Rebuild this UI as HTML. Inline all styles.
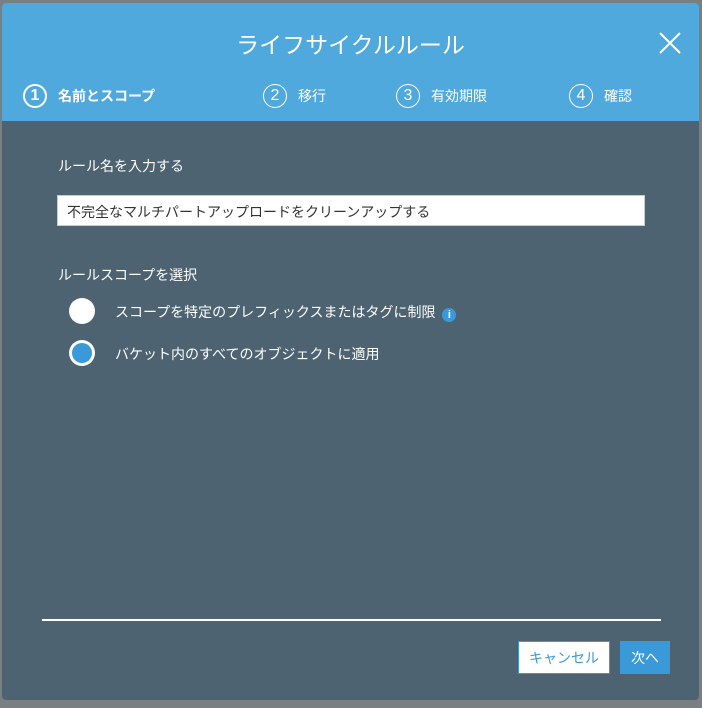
<!DOCTYPE html>
<html><head><meta charset="utf-8"><style>
*{margin:0;padding:0;box-sizing:border-box}
body{width:702px;height:708px;background:#7a7f82;font-family:"Liberation Sans","Noto Sans CJK JP",sans-serif;position:relative;overflow:hidden}
.m{position:absolute;left:2px;top:3px;width:697px;height:697px;background:#4d6371;border-radius:4px;overflow:hidden}
.h{height:118px;background:#4fa9dc;color:#fff;position:relative}
.t{position:absolute;top:23px;left:0;width:100%;text-align:center;font-size:23px}
.x{position:absolute;left:657px;top:29px}
.s{position:absolute;top:81px;font-size:14px;color:#fff;display:flex;align-items:center}
.c{width:24px;height:24px;border:1.5px solid #fff;border-radius:50%;display:flex;align-items:center;justify-content:center;font-size:16px;margin-right:11px}
.lbl{position:absolute;color:#fff;font-size:14px}
.in{position:absolute;left:55px;top:192px;width:588px;height:31px;background:#fff;border:1px solid #ccc;font-size:14px;color:#333;padding:6px 9px}
.r{position:absolute;width:26px;height:26px;border-radius:50%;background:#fff}
.r.on::after{content:"";position:absolute;left:3px;top:3px;width:20px;height:20px;border-radius:50%;background:#3a9ad9}
.hr{position:absolute;left:40px;top:616px;width:619px;height:2px;background:#fff}
.b{position:absolute;top:638px;height:33px;font-size:14px;display:flex;align-items:center;justify-content:center}
</style></head><body>
<div class="m">
<div class="h">
<div class="t">ライフサイクルルール</div>
<svg class="x" width="22" height="22" viewBox="0 0 22 22"><path d="M1 1L21 21M21 1L1 21" stroke="#fff" stroke-width="2"/></svg>
<div class="s" style="left:21px;font-weight:bold"><div class="c" style="border-width:2px">1</div>名前とスコープ</div>
<div class="s" style="left:261px"><div class="c">2</div>移行</div>
<div class="s" style="left:394px"><div class="c">3</div>有効期限</div>
<div class="s" style="left:567px"><div class="c">4</div>確認</div>
</div>
<div class="lbl" style="left:56px;top:153px">ルール名を入力する</div>
<div class="in">不完全なマルチパートアップロードをクリーンアップする</div>
<div class="lbl" style="left:56px;top:262px">ルールスコープを選択</div>
<div class="r" style="left:67px;top:295px"></div>
<div class="lbl" style="left:113px;top:299px">スコープを特定のプレフィックスまたはタグに制限 <span style="display:inline-block;width:14px;height:14px;border-radius:50%;background:#3a9ad9;color:#fff;font-size:11px;text-align:center;line-height:14px;font-weight:bold;vertical-align:-1px;margin-left:3px">i</span></div>
<div class="r on" style="left:67px;top:337px"></div>
<div class="lbl" style="left:113px;top:341px">バケット内のすべてのオブジェクトに適用</div>
<div class="hr"></div>
<div class="b" style="left:516px;width:92px;background:#fff;border:1px solid #3a9ad9;color:#3a9ad9">キャンセル</div>
<div class="b" style="left:618px;width:50px;background:#3a9ad9;color:#fff">次へ</div>
</div>
</body></html>
